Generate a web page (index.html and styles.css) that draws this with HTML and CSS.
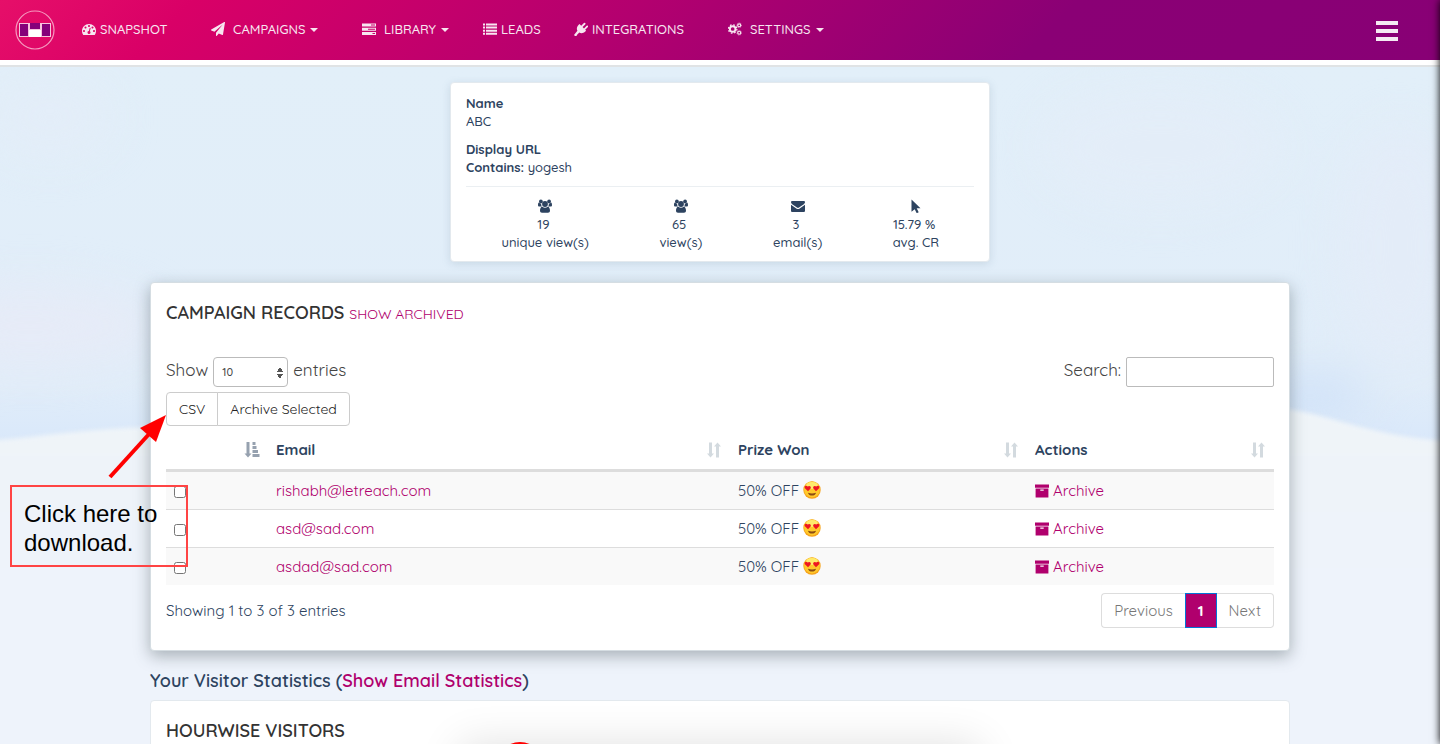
FILE: index.html
```html
<!DOCTYPE html>
<html lang="en">
<head>
    <meta charset="UTF-8">
    <meta name="viewport" content="width=device-width, initial-scale=1.0">
    <title>Campaign Records</title>
    <link rel="stylesheet" href="styles.css">
</head>
<body>

<!-- Shared icons -->
<svg class="sprite" width="0" height="0" aria-hidden="true">
    <symbol id="dashboard" viewBox="0 0 1792 1792">
        <path d="M384 1152q0-53-37.500-90.500t-90.500-37.500-90.500 37.500-37.500 90.500 37.500 90.500 90.500 37.500 90.500-37.500 37.500-90.500zm192-448q0-53-37.500-90.500t-90.500-37.500-90.500 37.500-37.500 90.500 37.500 90.500 90.500 37.500 90.500-37.500 37.500-90.500zm428 481l101-382q6-26-7.500-48.500t-38.500-29.500-48 6.500-30 39.500l-101 382q-60 5-107 43.500t-63 98.500q-20 77 20 146t117 89 146-20 89-117q16-60-6-117t-72-91zm660-33q0-53-37.500-90.500t-90.500-37.500-90.500 37.500-37.500 90.500 37.500 90.500 90.500 37.500 90.500-37.500 37.500-90.500zm-640-640q0-53-37.500-90.500t-90.500-37.500-90.500 37.500-37.500 90.500 37.500 90.500 90.500 37.500 90.500-37.500 37.500-90.500zm448 192q0-53-37.500-90.500t-90.500-37.500-90.500 37.500-37.500 90.500 37.500 90.500 90.500 37.500 90.500-37.500 37.500-90.500zm320 448q0 261-141 483-19 29-54 29h-1402q-35 0-54-29-141-221-141-483 0-182 71-348t191-286 286-191 348-71 348 71 286 191 191 286 71 348z"/>
    </symbol>
    <symbol id="plane" viewBox="0 0 1792 1792">
        <path d="M1764 11q33 24 27 64l-256 1536q-5 29-32 45-14 8-31 8-11 0-24-5l-453-185-242 295q-18 23-49 23-13 0-22-4-19-7-30.500-23.500t-11.500-36.500v-349l864-1059-1069 925-395-162q-37-14-40-55-2-40 32-59l1664-960q15-9 32-9 20 0 36 11z"/>
    </symbol>
    <symbol id="tasks" viewBox="0 0 14 14">
        <path fill-rule="evenodd" d="M0 1.500h14v3H0zM9 2.500v1h4v-1zM0 5.700h14v3H0zM6 6.700v1h7v-1zM0 9.900h14v3H0zM10.500 10.900v1H13v-1z"/>
    </symbol>
    <symbol id="list" viewBox="0 0 14 14">
        <path d="M0 1.500h2v2H0zM3 1.500h11v2H3zM0 4.600h2v2H0zM3 4.600h11v2H3zM0 7.700h2v2H0zM3 7.700h11v2H3zM0 10.800h2v2H0zM3 10.800h11v2H3z"/>
    </symbol>
    <symbol id="plug" viewBox="0 0 14 14">
        <path d="M7.200 3.800 9.900 1.100a.9.9 0 0 1 1.300 1.300L8.600 5l1.400 1.400 2.600-2.600a.9.9 0 0 1 1.300 1.300l-2.700 2.700.9.900-.8.800c-2 2-4.300 2.100-6 1.100L2.900 13a1.200 1.200 0 0 1-1.900 1L0 13l3.400-4.300C2.400 7 2.700 4.800 4.700 2.800l.8-.8z"/>
    </symbol>
    <symbol id="cogs" viewBox="0 0 15 14">
        <g fill="none" stroke="currentColor">
            <circle cx="5" cy="7" r="3" stroke-width="2"/>
            <circle cx="5" cy="7" r="4.500" stroke-width="1.400" stroke-dasharray="1.770 1.770"/>
            <circle cx="12" cy="3" r="1.600" stroke-width="1.300"/>
            <circle cx="12" cy="3" r="2.500" stroke-width=".7" stroke-dasharray="1 1"/>
            <circle cx="12" cy="11" r="1.600" stroke-width="1.300"/>
            <circle cx="12" cy="11" r="2.500" stroke-width=".7" stroke-dasharray="1 1"/>
        </g>
    </symbol>
    <symbol id="users" viewBox="0 0 14 14">
        <circle cx="2.900" cy="2.400" r="1.900"/>
        <circle cx="11.100" cy="2.400" r="1.900"/>
        <path d="M3.200 4.600C3 6 3.400 6.900 4 7.500H1.400C.5 7.500 0 7 0 6.200c0-1.500.3-2.600 1-2.600.5.700 1.500 1 2.200 1zM10.800 4.600c.2 1.400-.2 2.300-.8 2.900h2.600c.9 0 1.400-.5 1.400-1.300 0-1.500-.3-2.600-1-2.600-.5.700-1.500 1-2.200 1z"/>
        <circle cx="7" cy="5" r="2.900"/>
        <path d="M4.300 7.800c1.700 1.200 3.700 1.200 5.400 0 1.500.1 2.300 1.700 2.300 4 0 1.200-.8 2-2 2H4c-1.200 0-2-.8-2-2 0-2.300.8-3.900 2.300-4z"/>
    </symbol>
    <symbol id="envelope" viewBox="0 0 14 14">
        <path d="M0 3.300C0 2.500.6 2 1.300 2h11.400c.8 0 1.300.5 1.300 1.300 0 .8-.6 1.500-1.200 2L8 8.600c-.7.500-1.300.5-2 0L1.200 5.300C.5 4.800 0 4.100 0 3.300zM0 5.700l5.300 3.700c1.200.8 2.200.8 3.400 0L14 5.700v6c0 .7-.6 1.300-1.300 1.300H1.300C.6 13 0 12.400 0 11.700z"/>
    </symbol>
    <symbol id="pointer" viewBox="0 0 14 14">
        <path d="M2.500.5 11.500 9.300H7.700l2 4-2 .9-2-4-3.200 2.600z"/>
    </symbol>
    <symbol id="archive" viewBox="0 0 14 14">
        <path fill-rule="evenodd" d="M0 .5h14v3.200H0zM.6 4.400h12.800v9.100H.6zM5.300 5.600v1.200h3.400V5.600z"/>
    </symbol>
    <symbol id="sort" viewBox="0 0 16 16">
        <path d="M3 .5h3v11h2L4.500 15.500 1 11.500h2zM10 15.500v-11H8L11.500.5 15 4.500h-2v11z"/>
    </symbol>
    <symbol id="sort-asc" viewBox="0 0 16 16">
        <path d="M2.500 0h3v11.500h2L4 15.500.5 11.500h2zM8.500 0h3v3h-3zM8.500 4h4v3h-4zM8.500 8h5.500v3H8.500zM8.500 12h7v3h-7z"/>
    </symbol>
    <symbol id="love" viewBox="0 0 18 18">
        <circle cx="9" cy="9" r="8.700" fill="#f6a31c"/>
        <circle cx="9" cy="8.500" r="7.900" fill="#ffc92b"/>
        <ellipse cx="9" cy="4.500" rx="6" ry="3.500" fill="#ffeb6b"/>
        <path d="M5 10.300 1.900 7.300C.8 5.500 3 3.900 4.700 5.500c1.700-1.500 3.900 0 2.900 1.900zM13 10.300l3.100-3c1.100-1.800-1.100-3.400-2.800-1.800-1.700-1.500-3.900 0-2.900 1.900z" fill="#ee1620"/>
        <path d="M5 11.700q4 1.400 8 0c-.6 3.800-7.400 3.800-8 0z" fill="#8b4b13"/>
    </symbol>
</svg>

<div class="page">
    <header class="topbar">
        <a href="#" class="logo" aria-label="Home">
            <svg viewBox="0 0 40 40" width="40" height="40">
                <circle cx="20" cy="20" r="19" fill="none" stroke="#f59abf" stroke-width="1.200"/>
                <path d="M4 13h32v14H4z" fill="#f6c3dc"/>
                <path d="M5 14h8v12H5zM27 14h8v12h-8zM15 13h10v6H15z" fill="#86017a"/>
                <path d="M14 20h12v7H14z" fill="#fff"/>
            </svg>
        </a>
        <nav class="nav">
            <a href="#"><svg class="icon"><use href="#dashboard"/></svg>SNAPSHOT</a>
            <a href="#" class="dropdown"><svg class="icon"><use href="#plane"/></svg>CAMPAIGNS<i class="caret"></i></a>
            <a href="#" class="dropdown"><svg class="icon"><use href="#tasks"/></svg>LIBRARY<i class="caret"></i></a>
            <a href="#"><svg class="icon"><use href="#list"/></svg>LEADS</a>
            <a href="#"><svg class="icon"><use href="#plug"/></svg>INTEGRATIONS</a>
            <a href="#" class="dropdown"><svg class="icon"><use href="#cogs"/></svg>SETTINGS<i class="caret"></i></a>
        </nav>
        <button type="button" class="menu-btn" aria-label="Menu"><span></span><span></span><span></span></button>
    </header>

    <main class="content">
        <!-- Sky and hills behind the cards -->
        <svg class="scenery" viewBox="0 0 1440 680" preserveAspectRatio="none" aria-hidden="true">
            <defs>
                <linearGradient id="sky" x1="0" y1="0" x2="0" y2="1">
                    <stop offset="0" stop-color="#e2eff9"/>
                    <stop offset=".8" stop-color="#e1edf9"/>
                    <stop offset="1" stop-color="#d6e6fb"/>
                </linearGradient>
                <linearGradient id="hill" x1="0" y1="0" x2="0" y2="1">
                    <stop offset="0" stop-color="#eff4f8"/>
                    <stop offset=".5" stop-color="#eef3fb"/>
                </linearGradient>
                <filter id="soft" x="-50%" y="-100%" width="200%" height="300%" color-interpolation-filters="sRGB"><feGaussianBlur stdDeviation="22"/></filter>
                <filter id="edge" color-interpolation-filters="sRGB"><feGaussianBlur stdDeviation="2"/></filter>
            </defs>
            <path d="M0 0h1440v400H0z" fill="url(#sky)"/>
            <g filter="url(#soft)">
                <ellipse cx="30" cy="260" rx="130" ry="40" fill="#e6ebf7"/>
                <ellipse cx="50" cy="50" rx="60" ry="40" fill="#e3edf8"/>
                <ellipse cx="1160" cy="80" rx="120" ry="60" fill="#e3edf8"/>
                <ellipse cx="1400" cy="180" rx="60" ry="120" fill="#e3ecf8"/>
                <ellipse cx="1310" cy="330" rx="60" ry="20" fill="#cfe1f8"/>
            </g>
            <path d="M-20 376C40 372 90 362 150 362L1290 344C1340 352 1380 374 1460 376V700H-20z" fill="url(#hill)" filter="url(#edge)"/>
        </svg>

        <section class="card summary">
            <dl class="details">
                <dt>Name</dt>
                <dd>ABC</dd>
                <dt>Display URL</dt>
                <dd><b>Contains:</b> yogesh</dd>
            </dl>
            <div class="stats">
                <div><svg class="icon"><use href="#users"/></svg><span>19&nbsp;</span><span>unique view(s)</span></div>
                <div><svg class="icon"><use href="#users"/></svg><span>65&nbsp;</span><span>view(s)</span></div>
                <div><svg class="icon"><use href="#envelope"/></svg><span>3&nbsp;</span><span>email(s)</span></div>
                <div><svg class="icon"><use href="#pointer"/></svg><span>15.79 %&nbsp;</span><span>avg. CR</span></div>
            </div>
        </section>

        <section class="card records">
            <h2>CAMPAIGN RECORDS <a href="#">SHOW ARCHIVED</a></h2>
            <div class="filters">
                <div class="length">
                    <label for="length">Show</label>
                    <select id="length">
                        <option>10</option>
                        <option>25</option>
                        <option>50</option>
                    </select>
                    <span>entries</span>
                </div>
                <div class="search">
                    <label for="search">Search:</label>
                    <input type="search" id="search">
                </div>
            </div>
            <div class="btn-group">
                <button type="button">CSV</button>
                <button type="button">Archive Selected</button>
            </div>
            <table class="data">
                <thead>
                    <tr>
                        <th class="col-check"><div><span></span><svg class="sort active"><use href="#sort-asc"/></svg></div></th>
                        <th class="col-email"><div>Email<svg class="sort"><use href="#sort"/></svg></div></th>
                        <th class="col-prize"><div>Prize Won<svg class="sort"><use href="#sort"/></svg></div></th>
                        <th><div>Actions<svg class="sort"><use href="#sort"/></svg></div></th>
                    </tr>
                </thead>
                <tbody>
                    <tr>
                        <td><input type="checkbox" aria-label="Select rishabh@letreach.com"></td>
                        <td><a href="#">rishabh@letreach.com</a></td>
                        <td>50% OFF <svg class="emoji"><use href="#love"/></svg></td>
                        <td><a href="#"><svg class="icon"><use href="#archive"/></svg> Archive</a></td>
                    </tr>
                    <tr>
                        <td><input type="checkbox" aria-label="Select asd@sad.com"></td>
                        <td><a href="#">asd@sad.com</a></td>
                        <td>50% OFF <svg class="emoji"><use href="#love"/></svg></td>
                        <td><a href="#"><svg class="icon"><use href="#archive"/></svg> Archive</a></td>
                    </tr>
                    <tr>
                        <td><input type="checkbox" aria-label="Select asdad@sad.com"></td>
                        <td><a href="#">asdad@sad.com</a></td>
                        <td>50% OFF <svg class="emoji"><use href="#love"/></svg></td>
                        <td><a href="#"><svg class="icon"><use href="#archive"/></svg> Archive</a></td>
                    </tr>
                </tbody>
            </table>
            <div class="table-footer">
                <span>Showing 1 to 3 of 3 entries</span>
                <nav class="pagination">
                    <a href="#">Previous</a>
                    <a href="#" class="current">1</a>
                    <a href="#">Next</a>
                </nav>
            </div>
        </section>

        <h3 class="stats-title">Your Visitor Statistics (<a href="#">Show Email Statistics</a>)</h3>

        <section class="card visitors">
            <h2>HOURWISE VISITORS</h2>
        </section>
    </main>

    <div class="side-panel"></div>
    <div class="popup"><span class="popup-dot"></span></div>

    <div class="callout">
        Click here to download.
        <svg class="arrow" viewBox="0 0 64 70" width="64" height="70">
            <path d="M4 66 44 22" stroke="#f00" stroke-width="4"/>
            <path d="M60 4 50 31 34 17z" fill="#f00"/>
        </svg>
    </div>
</div>

</body>
</html>
```
FILE: styles.css
```css
* {
    box-sizing: border-box;
}
body {
    margin: 0;
    background: #fff;
    color: #2d4360;
    font-family: Quicksand, Lato, sans-serif;
    font-size: 15px;
    line-height: 18px;
}
a {
    color: #b0006d;
    text-decoration: none;
}
h2, h3, dl, dd {
    margin: 0;
}
button, input, select {
    font-family: inherit;
    font-weight: inherit;
}
.sprite {
    position: absolute;
}
.icon {
    width: 14px;
    height: 14px;
    fill: currentColor;
}
.page {
    position: relative;
    display: flex;
    flex-direction: column;
    height: calc(100vh - 3px);
    overflow: hidden;
}

/* Top bar */
.topbar {
    display: flex;
    flex-shrink: 0;
    align-items: center;
    height: 60px;
    padding: 0 42px 0 15px;
    background: linear-gradient(135deg, #e60f69 0%, #d90067 13%, #b3006f 43%, #8a0075 72%, #880075 100%);
}
.logo {
    display: flex;
}
.nav {
    display: grid;
    flex: 1;
    grid-template-columns: 129px 151px 121px 91px 154px auto;
    padding: 0 0 2px 27px;
}
.nav a {
    display: flex;
    align-items: center;
    gap: 4px;
    color: #f7e6f0;
    font-size: 13px;
    font-weight: 500;
}
.nav .dropdown .icon {
    margin-right: 4px;
}
.caret {
    margin: 2px 0 0 1px;
    border: 4px solid transparent;
    border-top-color: currentColor;
    border-bottom: 0;
}
.menu-btn {
    display: flex;
    flex-direction: column;
    gap: 4px;
    width: 22px;
    padding: 2px 0 0;
    border: 0;
    background: none;
}
.menu-btn span {
    height: 4px;
    background: #f5eaf3;
}

/* Content */
.content {
    position: relative;
    flex: 1;
    padding: 15px 150px 0;
    border-top: 2px solid #e0e3e5;
    margin-top: 5px;
    min-height: 0;
}
.scenery {
    position: absolute;
    inset: 0;
    z-index: -1;
    width: 100%;
    height: 100%;
}
.card {
    padding: 0 15px;
    border: 1px solid #e3e9ee;
    border-radius: 4px;
    background: #fff;
}
.card h2 {
    color: #333;
    font-size: 18px;
    font-weight: 600;
    line-height: 22px;
}
.summary {
    width: 540px;
    margin: 0 auto 20px;
    padding: 11px 15px 10px;
    box-shadow: 0 2px 8px rgba(100, 130, 150, .2);
    font-size: 13px;
    font-weight: 500;
}
.details dt {
    font-weight: bold;
}
.details dd + dt {
    margin-top: 10px;
}
.stats {
    display: grid;
    grid-template-columns: 158fr 113fr 120fr 116fr;
    margin-top: 10px;
    padding-top: 10px;
    border-top: 1px solid #ebeff2;
}
.stats div {
    display: flex;
    flex-direction: column;
    align-items: center;
}
.stats .icon {
    margin: 2px 0;
}
.records {
    padding-top: 19px;
    padding-bottom: 22px;
    border-color: #d5dde2;
    box-shadow: 0 5px 16px rgba(60, 75, 80, .4);
}
.records h2 a {
    font-size: 14px;
    font-weight: 400;
}
.filters {
    display: flex;
    justify-content: space-between;
    margin-top: 32px;
    color: #444;
    font-size: 17px;
}
.length, .search {
    display: flex;
    align-items: center;
    gap: 5px;
}
.filters label, .filters span {
    padding-bottom: 4px;
}
.length select {
    width: 75px;
    height: 30px;
    padding: 0 8px;
    border: 1px solid #bbb;
    border-radius: 4px;
    appearance: none;
    background:
        conic-gradient(from 153deg at 50% 0, #555 54deg, transparent 0) right 4px top 16px / 0 0 no-repeat,
        linear-gradient(to bottom right, transparent 50%, #555 50%) right 7px top 9px / 3px 5px no-repeat,
        linear-gradient(to bottom left, transparent 50%, #555 50%) right 4px top 9px / 3px 5px no-repeat,
        linear-gradient(to top right, transparent 50%, #555 50%) right 7px top 16px / 3px 5px no-repeat,
        linear-gradient(to top left, transparent 50%, #555 50%) right 4px top 16px / 3px 5px no-repeat,
        #fff;
    color: #444;
    font-size: 11px;
    font-weight: 500;
}
.search input {
    width: 148px;
    height: 30px;
    border: 1px solid #bbb;
    border-radius: 2px;
}
.btn-group {
    display: flex;
    margin-top: 5px;
}
.btn-group button {
    height: 34px;
    padding: 0 12px;
    border: 1px solid #ccc;
    background: #fff;
    color: #222;
    font-size: 14px;
}
.btn-group button:first-child {
    border-radius: 4px 0 0 4px;
}
.btn-group button:last-child {
    margin-left: -1px;
    border-radius: 0 4px 4px 0;
}

/* Records table */
.data {
    width: 100%;
    margin-top: 6px;
    border-collapse: separate;
    border-spacing: 0;
    table-layout: fixed;
}
.data th {
    height: 40px;
    padding: 0 8px 2px;
    border-bottom: 3px solid #ddd;
    text-align: left;
}
.data th div {
    display: flex;
    align-items: center;
    justify-content: space-between;
}
.col-check {
    width: 102px;
}
.col-email {
    width: 462px;
}
.col-prize {
    width: 297px;
}
.sort {
    width: 16px;
    height: 16px;
    fill: #d3dadf;
}
.sort.active {
    fill: #96a1af;
}
.data td {
    height: 38px;
    padding: 0 8px;
    border-bottom: 1px solid #ddd;
}
.data tr:last-child td {
    height: 37px;
    border-bottom: 0;
}
.data tbody tr:nth-child(odd) {
    background: #f9f9f9;
}
.data input {
    display: block;
    width: 12px;
    height: 12px;
    margin: 3px 0 0;
}
.data .icon {
    vertical-align: -2px;
}
.emoji {
    width: 18px;
    height: 18px;
    vertical-align: -3px;
}
.table-footer {
    display: flex;
    align-items: center;
    justify-content: space-between;
    margin-top: 8px;
}
.pagination {
    display: flex;
    line-height: 17px;
}
.pagination a {
    padding: 8px 12px;
    border: 1px solid #ddd;
    color: #777;
}
.pagination a:first-child {
    border-right: 0;
    border-radius: 4px 0 0 4px;
}
.pagination a:last-child {
    border-left: 0;
    border-radius: 0 4px 4px 0;
}
.pagination .current {
    border-color: #0275d8;
    background: #b0006d;
    color: #fff;
    font-weight: bold;
}

/* Visitor statistics */
.stats-title {
    margin: 19px 0 8px;
    font-size: 18px;
    font-weight: 600;
    line-height: 22px;
}
.visitors {
    min-height: 200px;
    padding-top: 19px;
}

.side-panel {
    position: absolute;
    top: 0;
    bottom: 0;
    left: 100%;
    width: 200px;
    box-shadow: 0 0 8px #000;
}
.popup {
    position: absolute;
    top: 100%;
    left: calc(50% - 260px);
    width: 520px;
    height: 200px;
    box-shadow: 0 0 40px rgba(0, 0, 0, .12);
}
.popup-dot {
    position: absolute;
    top: -2px;
    left: 35px;
    width: 50px;
    height: 50px;
    border-radius: 50%;
    background: #f00;
}

.callout {
    position: absolute;
    top: 485px;
    left: 10px;
    width: 178px;
    padding: 12px 12px 8px;
    border: 2px solid #f44;
    color: #000;
    font-family: "Liberation Sans", Arial, sans-serif;
    font-size: 24px;
    line-height: 29px;
}
.arrow {
    position: absolute;
    top: -76px;
    left: 94px;
}
```
